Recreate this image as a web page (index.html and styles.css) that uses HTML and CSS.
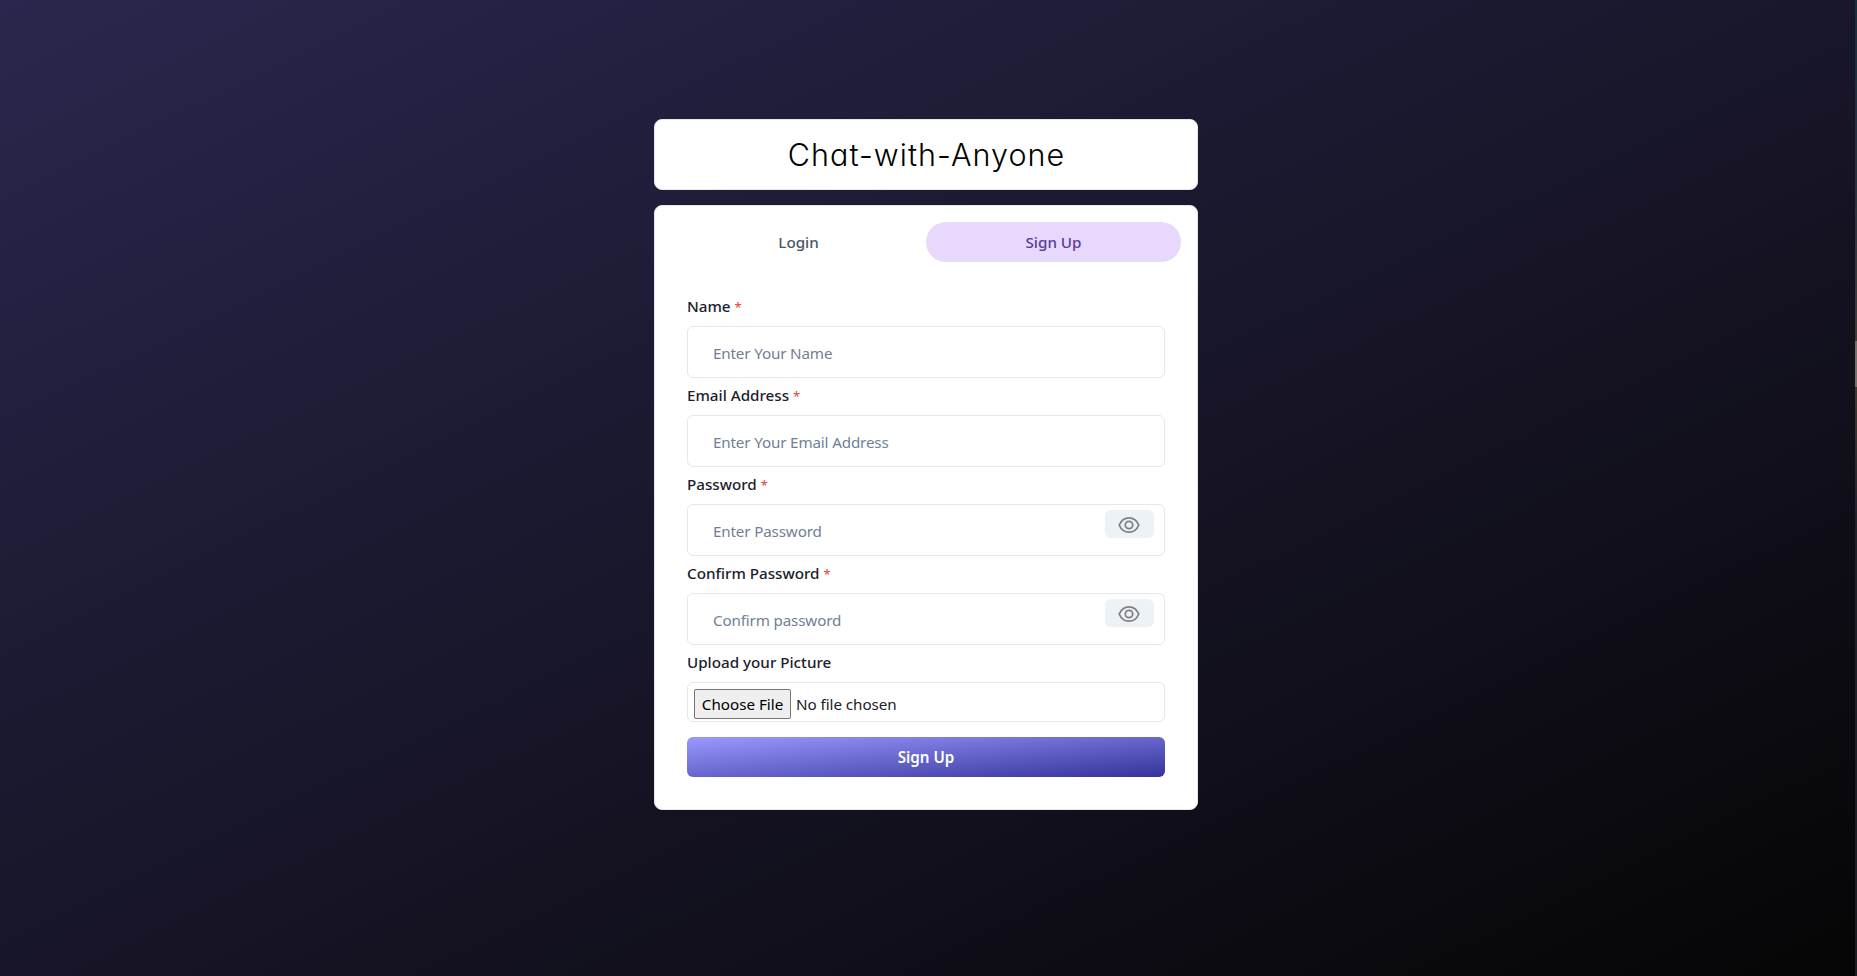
FILE: index.html
```html
<!DOCTYPE html>
<html lang="en">
<head>
<meta charset="utf-8">
<title>Chat-with-Anyone</title>
<link rel="stylesheet" href="styles.css">
</head>
<body>
<main class="page">
  <header class="card brand"><h1 class="title">Chat-with-Anyone</h1></header>
  <section class="card panel">
    <nav class="tabs">
      <button class="tab">Login</button>
      <button class="tab active">Sign Up</button>
    </nav>
    <form class="form">
      <div class="field">
        <label class="label">Name <span class="req">*</span></label>
        <div class="control"><input class="input" placeholder="Enter Your Name"></div>
      </div>
      <div class="field">
        <label class="label">Email Address <span class="req">*</span></label>
        <div class="control"><input class="input" placeholder="Enter Your Email Address"></div>
      </div>
      <div class="field">
        <label class="label">Password <span class="req">*</span></label>
        <div class="control"><input class="input" placeholder="Enter Password">
          <button type="button" class="eye"><svg class="icon" viewBox="0 0 22 18"><path d="M1.200 9C3.200 4.200 6.500 1.800 11 1.800S18.800 4.200 20.800 9C18.800 13.800 15.500 16.200 11 16.200S3.200 13.800 1.200 9Z"/><circle cx="11" cy="9" r="3.700"/></svg></button></div>
      </div>
      <div class="field">
        <label class="label">Confirm Password <span class="req">*</span></label>
        <div class="control"><input class="input" placeholder="Confirm password">
          <button type="button" class="eye"><svg class="icon" viewBox="0 0 22 18"><path d="M1.200 9C3.200 4.200 6.500 1.800 11 1.800S18.800 4.200 20.800 9C18.800 13.800 15.500 16.200 11 16.200S3.200 13.800 1.200 9Z"/><circle cx="11" cy="9" r="3.700"/></svg></button></div>
      </div>
      <div class="field">
        <label class="label">Upload your Picture</label>
        <div class="control file"><button type="button" class="choose">Choose File</button><span class="chosen">No file chosen</span></div>
      </div>
      <button type="button" class="submit">Sign Up</button>
    </form>
  </section>
</main>
<div class="scrollbar"><div class="thumb"></div></div>
</body>
</html>
```
FILE: styles.css
```css
* { box-sizing: border-box; }
body {
  margin: 0;
  height: 976px;
  display: flex;
  overflow: hidden;
  font-family: "Noto Sans", sans-serif;
  font-size: 15.200px;
  line-height: 24px;
  color: #1a202c;
  background: linear-gradient(154deg, #2a274e 0%, #201e3b 25%, #181629 50%, #0f0e18 75%, #050505 100%);
}
button, input { font: inherit; letter-spacing: inherit; margin: 0; border: 0; padding: 0; }
.page { flex: 1; padding: 119px 0 0 654px; }
.card { width: 544px; background: #fff; border: 1px solid #e2e8f0; border-radius: 8px; }
.brand { height: 71px; margin-bottom: 15px; display: flex; justify-content: center; align-items: center; }
.title { margin: 0; font: 300 30.500px/45px Inter, sans-serif; font-feature-settings: "cv11"; letter-spacing: 1.050px; padding-left: 1px; color: #000; }
.panel { height: 605px; padding: 16px; }
.tabs { display: flex; }
.tab { flex: 1; height: 40px; border-radius: 20px; background: transparent; font-weight: 500; color: #4a5568; }
.active { background: #e9d8fd; color: #553c9a; }
.form { padding: 32px 16px 0; display: flex; flex-direction: column; gap: 5px; }
.label { display: block; margin-bottom: 8px; font-weight: 500; }
.req { color: #e53e3e; font-weight: 400; font-size: 13px; line-height: 20px; }
.control { position: relative; }
.input { display: block; width: 100%; height: 52px; padding: 1px 25px 0; border: 1px solid #e2e8f0; border-radius: 6px; background: #fff; letter-spacing: -.15px; }
.input::placeholder { color: #718096; opacity: 1; }
.eye { position: absolute; top: 6px; right: 11px; width: 49px; height: 28px; border-radius: 6px; background: #edf2f7; display: flex; align-items: center; justify-content: center; padding: 1px 1px 0 0; }
.icon { width: 22px; height: 18px; fill: none; stroke: #808080; stroke-width: 1.800; }
.file { height: 40px; border: 1px solid #e2e8f0; border-radius: 6px; display: flex; padding: 6px 6px 0; gap: 5px; }
.choose { width: 97px; height: 30px; background: #efefef; border: 1px solid #767676; border-radius: 2px; color: #000; }
.chosen { line-height: 30px; letter-spacing: -.05px; }
.submit { height: 40px; margin-top: 10px; border-radius: 6px; background: linear-gradient(to bottom right, #9a99ff, #333399); color: #fff; font-weight: 600; }
.scrollbar { width: 2px; height: 976px; padding-top: 341px; background: linear-gradient(#17303d 0, #26333f 180px, #403d38 330px, #40382f 400px, #22222a 520px, #1c1c24 100%); }
.thumb { height: 46px; background: #77706a; }
```
